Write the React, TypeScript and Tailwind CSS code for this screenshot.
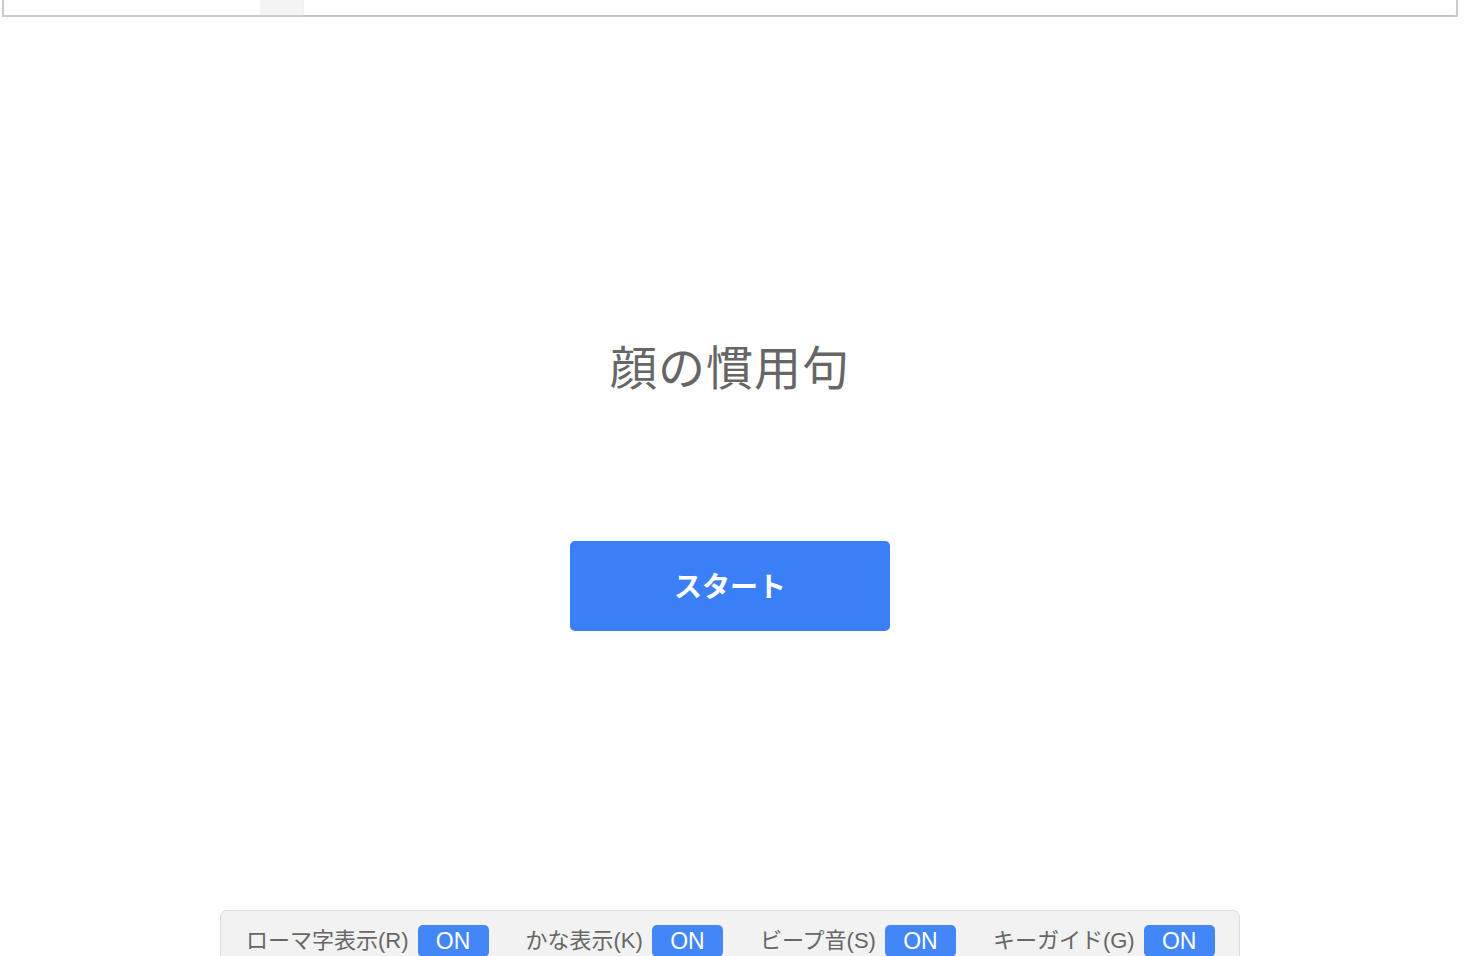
import React from 'react';

const font = { fontFamily: '"Liberation Sans", "Noto Sans CJK JP", sans-serif' };

const toggles = [
    { label: 'ローマ字表示(R)', on: true },
    { label: 'かな表示(K)', on: true },
    { label: 'ビープ音(S)', on: true },
    { label: 'キーガイド(G)', on: true },
];

export default function App() {
    return (
        <div className="w-[1468px] h-[956px] overflow-hidden bg-[#fefefe]" style={font}>
            <div className="w-[1460px] flex flex-col">
                {/* top input strip, scrolled mostly out of view */}
                <div className="ml-[2px] w-[1456px] h-[17px] border-2 border-t-0 border-[#cccccc] bg-white flex">
                    <div className="w-[256px] h-full bg-[#fefefe]" />
                    <div className="w-[44px] h-full bg-[#f4f4f4]" />
                    <div className="flex-1 h-full bg-white rounded-br-[6px] shadow-[0_1px_2px_rgba(0,0,0,0.06)]" />
                </div>

                <div className="flex flex-col items-center">
                    <h1 className="mt-[324px] text-[47px] leading-[56px] text-[#666666] tracking-[1px]">顔の慣用句</h1>
                    <button className="mt-[144px] w-[320px] h-[90px] pt-[4px] rounded-[5px] bg-[#3b7ff6] text-white text-[28px] font-bold">
                        スタート
                    </button>
                </div>

                <div className="mt-[279px] ml-[220px] w-[1020px] h-[60px] bg-[#f2f2f2] border border-[#dddddd] rounded-t-[7px] flex items-start pl-[25px] pt-[14px] gap-[37px]">
                    {toggles.map((t) => (
                        <div key={t.label} className="flex items-center gap-[9px]">
                            <span className="text-[22px] leading-[32px] text-[#666666]">{t.label}</span>
                            <span className="w-[71px] h-[32px] rounded-[5px] bg-[#4287f5] text-white text-[23px] leading-[32px] text-center">
                                {t.on ? 'ON' : 'OFF'}
                            </span>
                        </div>
                    ))}
                </div>
            </div>
        </div>
    );
}
